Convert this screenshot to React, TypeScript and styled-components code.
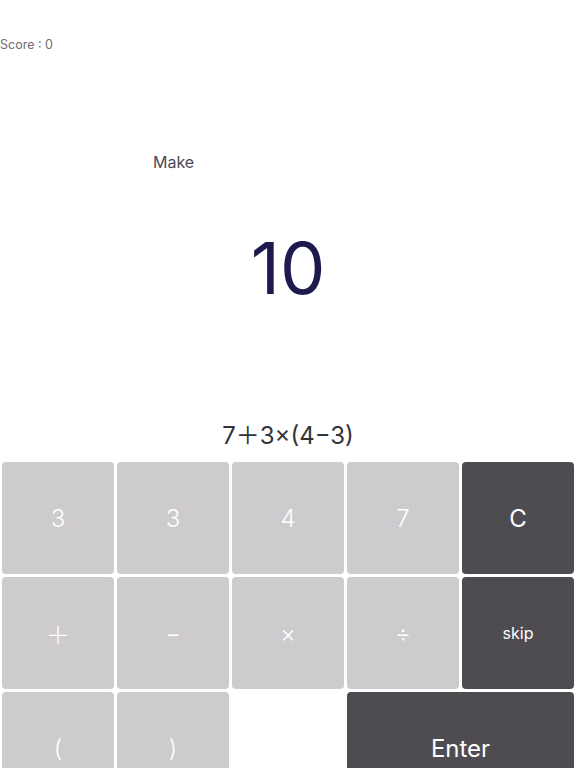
import styled, { createGlobalStyle } from 'styled-components';

const GlobalStyle = createGlobalStyle`
  html, body {
    margin: 0;
    padding: 0;
    background: #ffffff;
  }
  body {
    font-family: Inter, "Liberation Sans", "Noto Sans CJK JP", sans-serif;
  }
`;

const Screen = styled.div`
  width: 576px;
  height: 768px;
  overflow: hidden;
  display: flex;
  flex-direction: column;
  background: #ffffff;
`;

const Score = styled.div`
  margin-top: 37px;
  font-size: 12.5px;
  line-height: 16px;
  color: #6e6e74;
`;

const Prompt = styled.div`
  margin-top: 99px;
  padding-left: 153px;
  font-size: 16px;
  line-height: 20px;
  color: #4a4a55;
`;

const Target = styled.div`
  margin-top: 56px;
  text-align: center;
  font-size: 72px;
  line-height: 80px;
  color: #1d1a4f;
`;

const Expression = styled.div`
  margin-top: 113px;
  text-align: center;
  font-size: 24px;
  line-height: 30px;
  color: #333338;
`;

const Keypad = styled.div`
  margin-top: 11px;
  padding: 0 2px;
  display: grid;
  grid-template-columns: repeat(5, 112px);
  grid-auto-rows: 112px;
  gap: 3px;
`;

const Key = styled.button<{ $dark?: boolean; $span?: number; $small?: boolean }>`
  grid-column: span ${(p) => p.$span ?? 1};
  border: none;
  border-radius: 4px;
  background: ${(p) => (p.$dark ? '#4e4c50' : '#cdcbce')};
  color: #ffffff;
  font-family: Inter, "Liberation Sans", "Noto Sans CJK JP", sans-serif;
  font-size: ${(p) => (p.$small ? '16px' : '24px')};
  font-weight: ${(p) => (p.$dark ? 400 : 300)};
  display: flex;
  align-items: center;
  justify-content: center;
  padding: 0;
`;

const Blank = styled.div``;

export default function App() {
  return (
    <Screen>
      <GlobalStyle />
      <Score>Score : 0</Score>
      <Prompt>Make</Prompt>
      <Target>10</Target>
      <Expression>7＋3×(4−3)</Expression>
      <Keypad>
        <Key>3</Key>
        <Key>3</Key>
        <Key>4</Key>
        <Key>7</Key>
        <Key $dark>C</Key>
        <Key>＋</Key>
        <Key>−</Key>
        <Key>×</Key>
        <Key>÷</Key>
        <Key $dark $small>skip</Key>
        <Key>(</Key>
        <Key>)</Key>
        <Blank />
        <Key $dark $span={2}>Enter</Key>
      </Keypad>
    </Screen>
  );
}
